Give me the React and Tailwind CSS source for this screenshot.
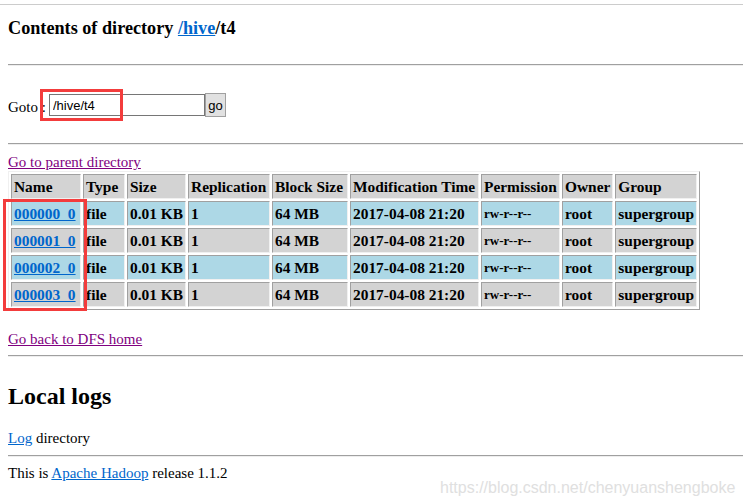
const rows = [
  { name: "000000_0", bg: "bg-[#add8e6]" },
  { name: "000001_0", bg: "bg-[#d3d3d3]" },
  { name: "000002_0", bg: "bg-[#add8e6]" },
  { name: "000003_0", bg: "bg-[#d3d3d3]" },
];

const cols = [
  { label: "Name", w: "w-[70px]" },
  { label: "Type", w: "w-[42px]" },
  { label: "Size", w: "w-[59px]" },
  { label: "Replication", w: "w-[82px]" },
  { label: "Block Size", w: "w-[76px]" },
  { label: "Modification Time", w: "w-[129px]" },
  { label: "Permission", w: "w-[79px]" },
  { label: "Owner", w: "w-[50px]" },
  { label: "Group", w: "w-[81px]" },
];

const cell =
  "h-[25px] px-[2px] py-0 text-left align-middle whitespace-nowrap border border-t-[#a0a0a0] border-l-[#a0a0a0] border-b-[#f0f0f0] border-r-[#f0f0f0]";

const Rule = ({ className = "" }) => (
  <div className={`border-t border-t-[#a0a0a0] border-b border-b-[#eeeeee] ${className}`} />
);

const App = () => {
  return (
    <div className="relative w-[743px] h-[502px] overflow-hidden bg-white text-black text-[15px] leading-[18px] font-['Liberation_Serif',serif]">
      <div className="pt-[4px] border-b border-b-[#cccccc]" />
      <div className="pl-[8px]">
        <h3 className="mt-[13px] text-[18.2px] leading-[21px] font-bold">
          Contents of directory{" "}
          <a className="text-[#0066cc] underline">/hive</a>/t4
        </h3>
        <Rule className="mt-[25px]" />
        <div className="mt-[27px] flex items-center">
          <span className="mt-[4px]">Goto :</span>
          <input
            readOnly
            value="/hive/t4"
            className="ml-[3px] w-[156px] h-[22px] px-[3px] border border-[#767676] text-[13px] font-['Liberation_Sans',sans-serif] outline-none"
          />
          <button className="w-[21px] h-[24px] border border-[#a0a0a0] bg-[#e1e1e1] text-[13px] leading-none font-['Liberation_Sans',sans-serif]">
            go
          </button>
        </div>
        <Rule className="mt-[26px]" />
        <div className="mt-[8px]">
          <a className="text-[#800080] underline">Go to parent directory</a>
        </div>
        <table className="border-separate border-spacing-[2px] border border-t-[#f0f0f0] border-l-[#f0f0f0] border-b-[#a0a0a0] border-r-[#a0a0a0] font-bold text-[15.4px]">
          <thead>
            <tr>
              {cols.map((c) => (
                <th key={c.label} className={`${cell} ${c.w} bg-[#d3d3d3]`}>
                  {c.label}
                </th>
              ))}
            </tr>
          </thead>
          <tbody>
            {rows.map((r) => (
              <tr key={r.name} className={r.bg}>
                <td className={cell}>
                  <a className="text-[#0066cc] underline">{r.name}</a>
                </td>
                <td className={cell}>file</td>
                <td className={cell}>0.01 KB</td>
                <td className={cell}>1</td>
                <td className={cell}>64 MB</td>
                <td className={cell}>2017-04-08 21:20</td>
                <td className={`${cell} text-[13px]`}>rw-r--r--</td>
                <td className={cell}>root</td>
                <td className={cell}>supergroup</td>
              </tr>
            ))}
          </tbody>
        </table>
        <div className="mt-[20px]">
          <a className="text-[#800080] underline">Go back to DFS home</a>
        </div>
        <Rule className="mt-[7px]" />
        <h2 className="mt-[25px] text-[24px] leading-[28px] font-bold">Local logs</h2>
        <div className="mt-[19px]">
          <a className="text-[#0066cc] underline">Log</a> directory
        </div>
        <Rule className="mt-[8px]" />
        <div className="mt-[7px]">
          This is <a className="text-[#0066cc] underline">Apache Hadoop</a> release 1.1.2
        </div>
      </div>

      <div className="absolute left-[40px] top-[89px] w-[83px] h-[32px] border-[3px] border-[#f33c3c]" />
      <div className="absolute left-[3px] top-[199px] w-[84px] h-[112px] border-[3px] border-[#f33c3c]" />
      <div className="absolute left-[440px] top-[479px] text-[16px] leading-[18px] text-[#e0e0e0] font-['Liberation_Sans',sans-serif]">
        https://blog.csdn.net/chenyuanshengboke
      </div>
    </div>
  );
};

export default App;
